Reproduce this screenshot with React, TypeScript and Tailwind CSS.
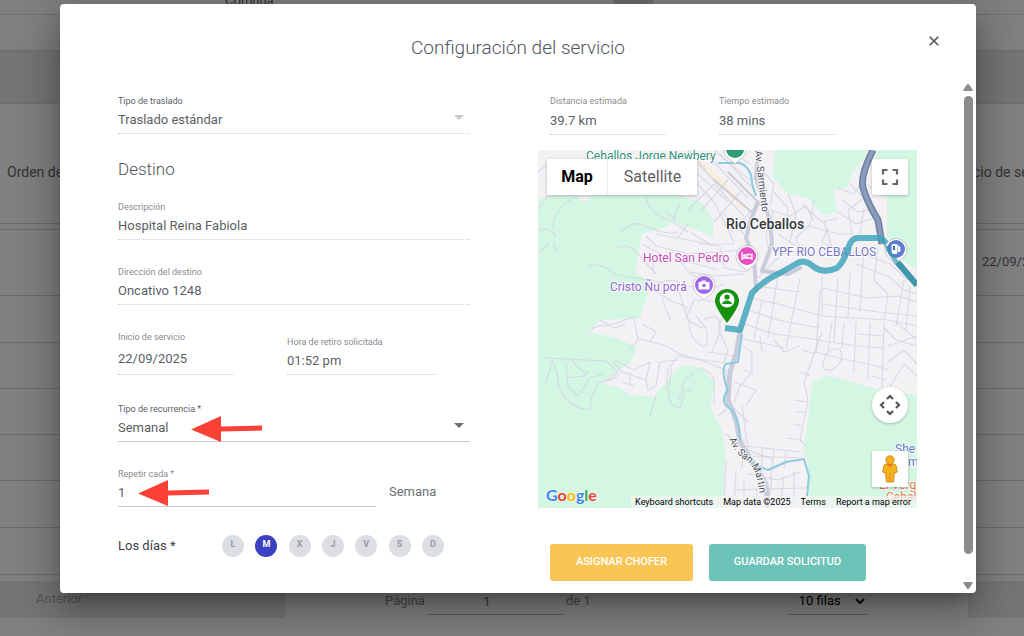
import { useId, useState, type ReactNode } from 'react';
import { clsx } from 'clsx';

const rowHeights = [
  'h-[6px]',
  'h-[66px]',
  'h-[47px]',
  'h-[46px]',
  'h-[46px]',
  'h-[46px]',
  'h-[47px]',
  'h-[47px]',
];

const weekDays = ['L', 'M', 'X', 'J', 'V', 'S', 'D'];

function Caret({ className }: { className?: string }) {
  return (
    <svg viewBox="0 0 10 5" className={clsx('pointer-events-none h-[5px] w-[10px]', className)} aria-hidden="true">
      <path d="M0 0h10L5 5z" fill="currentColor" />
    </svg>
  );
}

function Arrow({ className }: { className?: string }) {
  return (
    <svg viewBox="0 0 71 26" className={clsx('pointer-events-none absolute h-[26px] w-[71px]', className)} aria-hidden="true">
      <path d="M0 13.500L30 0v10.500l41-1v5l-41 1V26z" fill="#fb4135" />
    </svg>
  );
}

interface FieldProps {
  label: string;
  value: string;
  kind?: 'text' | 'select';
  disabled?: boolean;
  strong?: boolean;
  className?: string;
  boxClass?: string;
  children?: ReactNode;
}

function Field({ label, value, kind = 'text', disabled, strong, className, boxClass = 'h-[27px]', children }: FieldProps) {
  const id = useId();
  const control = 'w-full min-w-0 appearance-none bg-transparent p-0 text-[13px] leading-5 text-[#5b5f65] opacity-100 outline-none';
  return (
    <div className={clsx('relative', className)}>
      <label htmlFor={id} className={clsx('block text-[9px] leading-3', strong ? 'text-[#5c6068]' : 'text-[#888b90]')}>
        {label}
      </label>
      <div className={clsx('flex items-center border-b', disabled ? 'border-dotted border-[#cfd0d2]' : 'border-[#c8cacc]', boxClass)}>
        {kind === 'select' ? (
          <>
            <select id={id} disabled={disabled} defaultValue={value} className={control}>
              <option>{value}</option>
            </select>
            <Caret className={clsx('mr-[6px] mb-[6px] shrink-0', disabled ? 'text-[#c6c8ca]' : 'text-[#6b6e72]')} />
          </>
        ) : (
          <input id={id} disabled={disabled} defaultValue={value} className={control} />
        )}
      </div>
      {children}
    </div>
  );
}

function DayPicker() {
  const [days, setDays] = useState(['M']);
  const toggle = (day: string) =>
    setDays((prev) => (prev.includes(day) ? prev.filter((d) => d !== day) : [...prev, day]));

  return (
    <div className="mt-7 flex items-center" role="group" aria-labelledby="days-label">
      <span id="days-label" className="w-[104px] text-[13px] leading-5 text-[#3c4046]">
        Los días *
      </span>
      <div className="flex w-[222px] justify-between">
        {weekDays.map((day) => (
          <button
            key={day}
            type="button"
            aria-pressed={days.includes(day)}
            onClick={() => toggle(day)}
            className={clsx(
              'flex size-[22px] items-center justify-center rounded-full pb-0.5 text-[9px] font-bold',
              days.includes(day) ? 'bg-[#3c40c2] text-white' : 'bg-[#dcdee3] text-[#979aa3]',
            )}
          >
            {day}
          </button>
        ))}
      </div>
    </div>
  );
}

const parks = [
  'M0 50L10 46L35 45L47 52L56 45L139 45L165 53L175 70V87L159 80L135 72L125 78L105 83L102 93L97 123L110 130L112 137L102 168L62 170L50 182L75 187L99 197L92 213L62 233L82 238L92 245L115 247L129 233L139 218L150 215L164 218L177 233L172 257L184 280L187 297L185 358H0z',
  'M237 0L235 27L249 43L270 48L285 65L299 62L295 40L309 37L315 22L325 10L330 0z',
  'M337 0L345 45L349 47V87L367 113L379 118V0z',
  'M289 225L275 232L265 303L270 310L269 358H379V245L334 238z',
];

const streets = [
  // north-west slopes
  'M0 22L14 10L30 14M8 30L22 18M0 60Q8 48 14 40M14 78Q18 55 40 46M0 80Q14 76 18 88M2 102L12 92M16 94L18 102',
  'M108 47Q112 66 132 70L150 82M135 72L142 52M150 74L140 88M128 62L138 70M152 82L175 96',
  'M84 82Q92 72 104 74Q126 86 140 82M80 98Q92 92 100 104L118 124M50 116Q64 112 76 124Q92 128 112 130L140 138',
  'M108 86L118 96L150 104L178 102M104 94L126 106L152 112L180 120M118 84L160 92L182 96M116 124Q112 108 122 106',
  'M112 138L132 150L150 158M118 136Q126 128 142 132M124 148L132 170M140 138L150 170L164 178M138 104L152 124L170 132',
  // west ridge
  'M52 182Q56 174 70 176L98 166M62 170L76 178L88 174M96 168L100 190L92 200M104 174L118 182L112 192M100 188L128 196L142 204',
  'M8 208L68 211L80 222L66 232M14 210Q22 228 20 234Q26 252 42 258L52 260L54 246L60 232Q72 232 82 224M28 212L30 236L40 246L52 228L66 224',
  'M34 208Q38 220 50 222L46 226L28 228M8 232L14 212M75 212L84 222L108 230L110 240L118 236L122 212L140 210',
  'M76 210L96 220L112 212L108 230M128 240L130 220L140 206L166 210L188 213M118 246L112 266M84 232L96 236M92 222V236',
  'M134 218L130 240Q130 256 142 258L146 244Q140 230 156 224M142 250Q140 240 154 240M162 218Q176 222 176 232V254',
  // town centre
  'M142 48L160 24L190 52M150 60L176 34L206 66M160 14L186 40M168 4L210 48M182 4L216 40M164 60L190 30M176 72L204 40M196 80L216 58M186 64L206 84',
  'M150 0L168 20M176 0L212 30M192 0L212 14M156 30L176 52L196 92M160 94L196 94M178 102L206 100L212 112M182 96L186 118L208 122',
  'M152 122L178 126L206 124M150 136L170 140L186 134M148 168L156 150L186 152M152 168Q148 186 164 196Q172 198 168 178L158 166',
  'M166 170Q184 160 182 182L174 202M188 158L180 178L190 200L186 212M170 202L196 206M142 204L168 212L188 220V260L180 266',
  // north-east
  'M222 18L236 34L232 56M236 42L250 58L248 78M232 60L252 66L268 56L276 72M250 44L258 64L252 92M276 50L272 74L258 88L264 104',
  'M264 54L284 72L300 68M286 72L294 98M270 76L300 84L316 84M300 62L318 74L336 68M304 50L320 62L338 58M312 34L326 48L310 60M300 38L316 44L324 30L336 40',
  'M236 60L228 84L232 108M240 84L258 96M220 128L244 104L266 100M216 52L230 60M310 60L314 84M326 58L322 84M290 78L284 92L306 104',
  // grid in the east
  'M214 148L240 154L284 166M210 160L240 170L282 178M206 174L236 184L282 190M202 188L246 198M224 150L216 188M240 126L230 188M262 128L248 198M282 140L278 202',
  'M218 136L262 142M284 126V166L350 170L379 176M284 138L330 148L360 146L379 152M284 154L340 162L379 166M300 128L296 192M312 122L310 168M326 96L322 162',
  'M340 96L336 130L350 144L346 170M330 106L352 114L370 130M318 114L350 126L366 140L379 144M366 130L358 176M372 136L368 180M300 100L318 104',
  'M278 190L320 196L345 198M278 202L300 208L330 214M294 172L290 200M306 172L304 198M318 172L316 222M332 172L330 230M346 172L344 238M320 184L346 186',
  'M288 206Q292 196 302 200Q308 210 294 220Q280 222 288 206M346 178L358 190L379 196M350 196L379 186M350 212L366 200L379 214M350 240L366 214L379 226M358 172L379 190M332 214L350 220M334 226L348 230',
  'M284 182L266 232L270 250L262 290L268 296M264 200L278 204M262 222L272 226M256 250L270 252M258 262L268 262M256 274L264 276M248 288L264 290',
  // below the centre
  'M204 196L214 202V222L202 236L196 252M206 220L216 224M196 232L218 240L208 256M204 256L210 300L236 310M222 186L224 202M236 190L246 202L262 196',
  'M196 258L210 272M206 288L204 318M208 296L262 302M212 306L264 308M224 298V330M236 300L232 330M248 302L246 318M210 324L240 330L262 322',
  'M188 310L186 352M198 320L196 358M206 330V358M196 340L268 338M220 332L218 358M234 326L230 358M246 326L242 358M256 322V358M194 350L266 352M188 284L196 290',
];

const route = 'M379 135L355 107Q348 88 340 88H320Q314 88 311 96Q306 112 299 118Q286 124 276 117Q266 108 258 114L242 123Q226 130 214 143L202 180L187 178';

interface PinProps {
  x: number;
  y: number;
  color: string;
  children?: ReactNode;
}

function Pin({ x, y, color, children }: PinProps) {
  return (
    <g transform={`translate(${x} ${y})`}>
      <path d="M0 15Q-4 11-8 8A11 11 0 1 1 8 8Q4 11 0 15z" fill="#fff" stroke="#b9bcc4" strokeWidth="0.800" />
      <circle r="9" fill={color} />
      {children}
    </g>
  );
}

function MapDrawing() {
  return (
    <svg viewBox="0 0 379 358" preserveAspectRatio="xMidYMid slice" className="h-full w-full" role="img" aria-label="Rio Ceballos">
      <rect width="379" height="358" fill="#f3f1f4" />
      {parks.map((d) => (
        <path key={d} d={d} fill="#d4f7e3" />
      ))}
      <path d="M158 8L182 32L206 58" stroke="#f8efd8" strokeWidth="5" fill="none" />
      <g fill="none" stroke="#d3d5e2" strokeOpacity="0.800" strokeWidth="1.200" strokeLinejoin="round">
        {streets.map((d) => (
          <path key={d} d={d} />
        ))}
      </g>
      <g fill="none" stroke="#c9cddb" strokeWidth="4" strokeLinejoin="round" strokeLinecap="round">
        <path d="M220 2L218 28L226 52L232 72L234 94L224 121L250 124L262 118" />
        <path d="M220 52L212 72L208 88L216 108L218 140" />
        <path d="M176 30L216 64M190 22L218 50" strokeWidth="2" />
        <path d="M202 182L198 204L192 222L190 250L198 270L202 292L216 314L228 334L230 358" strokeWidth="5" />
      </g>
      <g fill="none" stroke="#8ccbe0" strokeWidth="2" strokeLinejoin="round">
        <path d="M180 13L202 13Q214 18 214 34L218 46" />
        <path d="M204 184L200 212L188 214Q182 220 190 240Q180 252 194 260Q202 272 202 290" />
        <path d="M202 302L214 314L230 320L248 312L266 309L271 326L269 346" />
      </g>
      <path d="M335 0Q322 26 325 38Q330 54 340 70L344 94" fill="none" stroke="#6d80a1" strokeWidth="7" />
      <path d="M335 0Q322 26 325 38Q330 54 340 70L344 94" fill="none" stroke="#8a9dbd" strokeWidth="4" />

      <g fontSize="12" stroke="#fff" strokeWidth="2" strokeOpacity="0.800" paintOrder="stroke">
        <text x="48" y="10" fill="#2f9479">Ceballos Jorge Newbery</text>
        <text x="105" y="112" fill="#c64fb6">Hotel San Pedro</text>
        <text x="72" y="141" fill="#9563d4">Cristo Ñu porá</text>
        <text x="234" y="106" fill="#7378c8">YPF RIO CEBALLOS</text>
        <text x="188" y="79" fill="#33363b" fontSize="14" fontWeight="500">Rio Ceballos</text>
        <text x="357" y="303" fill="#6a74cc">She</text>
        <text x="370" y="316" fill="#6a74cc">m</text>
        <text x="341" y="339" fill="#dd7d4b">El Verg</text>
        <text x="348" y="351" fill="#dd7d4b">Cebal</text>
      </g>

      <path d={route} fill="none" stroke="#3ba3ba" strokeOpacity="0.820" strokeWidth="6" strokeLinejoin="round" />
      <path d="M355 107L379 135" stroke="#2f8398" strokeOpacity="0.600" strokeWidth="6" />

      <g fontSize="10" fill="#4a4e55" stroke="#fff" strokeWidth="2" strokeOpacity="0.800" paintOrder="stroke">
        <path id="sarmiento" d="M217 1L225 70" fill="none" stroke="none" />
        <path id="sanmartin" d="M191 289Q197 304 209 311Q222 322 222 358" fill="none" stroke="none" />
        <text>
          <textPath href="#sarmiento">Av. Sarmiento</textPath>
        </text>
        <text>
          <textPath href="#sanmartin">Av. San Martin</textPath>
        </text>
      </g>

      <Pin x={197} y={-1} color="#2f9e77" />
      <Pin x={209} y={106} color="#e84fc0">
        <path d="M-5-4v8M-5 2H5M5 4V-1.500H0V2" fill="none" stroke="#fff" strokeWidth="1.400" />
        <circle cx="-2.500" cy="-0.500" r="1.500" fill="#fff" />
      </Pin>
      <Pin x={166} y={135} color="#a066e6">
        <path d="M-5.500-3H-3l1-1.500h3.500L2.500-3h3v7.500h-11z" fill="#fff" />
        <circle cy="0.500" r="1.800" fill="#a066e6" />
      </Pin>
      <Pin x={358} y={99} color="#5f7bd0">
        <path d="M-4-4.500h5v9h-5zM1.500-3.500L4-2v4.500H2" fill="#fff" stroke="#fff" strokeWidth="0.800" />
        <path d="M-2-3v4" stroke="#3f66b5" strokeWidth="2" />
      </Pin>
      <path d="M349 96Q349 101 364 118" fill="none" stroke="#3b93ae" strokeOpacity="0.700" strokeWidth="4" />

      <g transform="translate(189 140)">
        <path d="M0 33Q-12 17-12 11A12 12 0 1 1 12 11Q12 17 0 33z" fill="#17920f" />
        <circle cy="10" r="7.500" fill="#fff" />
        <circle cy="7" r="2.600" fill="#17920f" />
        <path d="M-5 14Q-4 10.500 0 10.500T5 14z" fill="#17920f" />
      </g>
    </svg>
  );
}

const controlShadow = 'shadow-[0_1px_3px_rgba(0,0,0,0.25)]';

function RouteMap() {
  return (
    <div className="relative h-[358px] overflow-hidden">
      <MapDrawing />
      <div className={clsx('absolute top-[9px] left-[9px] flex h-9 bg-white text-base', controlShadow)}>
        <button type="button" className="w-[61px] border-r border-[#ececec] font-bold text-black">
          Map
        </button>
        <button type="button" className="w-[89px] text-[#5f5f5f]">
          Satellite
        </button>
      </div>
      <button
        type="button"
        aria-label="Toggle fullscreen view"
        className={clsx('absolute top-[9px] right-[9px] flex size-9 items-center justify-center rounded-xs bg-white', controlShadow)}
      >
        <svg viewBox="0 0 18 18" className="size-[18px]" fill="none" stroke="#666" strokeWidth="2.200">
          <path d="M2 6.500V2h4.500M11.500 2H16v4.500M16 11.500V16h-4.500M6.500 16H2v-4.500" />
        </svg>
      </button>
      <div className="absolute right-[9px] bottom-[21px] flex flex-col gap-7">
        <button
          type="button"
          aria-label="Map camera controls"
          className={clsx('flex size-9 items-center justify-center rounded-full bg-white', controlShadow)}
        >
          <svg viewBox="0 0 22 22" className="size-[22px]" fill="none" stroke="#555" strokeWidth="2.200">
            <path d="M8 5l3-3 3 3M8 17l3 3 3-3M5 8l-3 3 3 3M17 8l3 3-3 3" />
          </svg>
        </button>
        <button
          type="button"
          aria-label="Drag Pegman onto the map to open Street View"
          className={clsx('flex size-9 items-center justify-center bg-white', controlShadow)}
        >
          <svg viewBox="0 0 16 28" className="h-7 w-4" fill="#f6b01f" stroke="#c98516" strokeWidth="0.800">
            <path d="M4 9h8q2 0 2.500 3l.8 5-2.300 1-.5-1-.8 10H4.300l-.8-10-.5 1-2.300-1 .8-5Q2 9 4 9z" />
            <circle cx="8" cy="5" r="4.200" />
            <path d="M5 9.500l3 2.500 3-2.500z" fill="#e0662a" stroke="none" />
            <path d="M8 19v8" />
          </svg>
        </button>
      </div>
      <a
        href="#map"
        aria-label="Google"
        className="absolute bottom-[1px] left-2 font-['Lato',sans-serif] text-base leading-6 font-bold [paint-order:stroke] [-webkit-text-stroke:1px_#ffffffcc]"
      >
        <span className="text-[#4285f4]">G</span>
        <span className="text-[#ea4335]">o</span>
        <span className="text-[#fbbc05]">o</span>
        <span className="text-[#4285f4]">g</span>
        <span className="text-[#34a853]">l</span>
        <span className="text-[#ea4335]">e</span>
      </a>
      <div className="absolute right-0 bottom-0 flex gap-[10px] bg-[#f5f5f5]/70 pr-[6px] pl-1 text-[9px] leading-3 whitespace-nowrap text-black">
        <button type="button">Keyboard shortcuts</button>
        <span>Map data ©2025</span>
        <a href="#terms">Terms</a>
        <a href="#report">Report a map error</a>
      </div>
    </div>
  );
}

function ServiceDialog() {
  return (
    <div
      role="dialog"
      aria-modal="true"
      aria-labelledby="dialog-title"
      className="w-full rounded-[4px] bg-white shadow-[0_11px_15px_-7px_rgba(0,0,0,0.3),0_24px_38px_3px_rgba(0,0,0,0.16),0_4px_40px_8px_rgba(0,0,0,0.16)]"
    >
      <header className="relative flex h-[78px] items-center justify-center">
        <h2 id="dialog-title" className="pt-2.5 text-[19px] leading-6 font-light text-[#4f545b]">
          Configuración del servicio
        </h2>
        <button type="button" aria-label="Cerrar" className="absolute top-[27px] right-8 flex size-5 items-center justify-center">
          <svg viewBox="0 0 10 10" className="size-[10px]" stroke="#4b4f56" strokeWidth="1.500">
            <path d="M0.700 0.700l8.600 8.600M9.300 0.700L0.700 9.300" />
          </svg>
        </button>
      </header>

      <div className="flex">
        <form className="grid flex-1 grid-cols-[352fr_379fr] gap-x-[68px] pt-[13px] pr-[46px] pb-3 pl-[58px]" onSubmit={(e) => e.preventDefault()}>
          <div>
            <Field label="Tipo de traslado" value="Traslado estándar" kind="select" disabled strong />
            <h3 className="mt-[23px] text-[17px] leading-6 font-light text-[#4f545b]">Destino</h3>
            <Field label="Descripción" value="Hospital Reina Fabiola" disabled className="mt-5" />
            <Field label="Dirección del destino" value="Oncativo 1248" disabled className="mt-[26px]" />
            <div className="mt-[26px] flex items-end gap-[53px]">
              <Field label="Inicio de servicio" value="22/09/2025" disabled className="w-[116px]" boxClass="h-8" />
              <Field label="Hora de retiro solicitada" value="01:52 pm" disabled className="w-[150px]" />
            </div>
            <Field label="Tipo de recurrencia *" value="Semanal" kind="select" strong className="mt-7">
              <Arrow className="top-[13px] left-[73px]" />
            </Field>
            <div className="mt-[26px] flex items-end gap-[13px]">
              <Field label="Repetir cada *" value="1" className="w-[258px]">
                <Arrow className="top-[12px] left-5" />
              </Field>
              <span className="pb-[5px] text-[13px] leading-5 text-[#6c7076]">Semana</span>
            </div>
            <DayPicker />
          </div>

          <div className="flex flex-col">
            <div className="flex gap-[53px] pl-3">
              <Field label="Distancia estimada" value="39.7 km" disabled className="w-[116px]" boxClass="h-7" />
              <Field label="Tiempo estimado" value="38 mins" disabled className="w-[116px]" boxClass="h-7" />
            </div>
            <div className="mt-[15px]">
              <RouteMap />
            </div>
            <div className="mt-auto flex gap-4 pt-9 pl-3 text-[11px] font-medium text-white">
              <button type="button" className="h-[37px] w-[143px] rounded-[3px] bg-[#f9c555]">
                ASIGNAR CHOFER
              </button>
              <button type="submit" className="h-[37px] w-[157px] rounded-[3px] bg-[#6cc3b7]">
                GUARDAR SOLICITUD
              </button>
            </div>
          </div>
        </form>

        <div className="mr-[3px] flex w-[10px] flex-col items-center pt-[2px] pb-1 text-[#8c8c8c]" aria-hidden="true">
          <svg viewBox="0 0 10 7" className="h-[7px] w-[10px]">
            <path d="M4 0.500q1-1 2 0L9.500 5.500q.5 1.500-1 1.500h-7q-1.500 0-1-1.500z" fill="currentColor" />
          </svg>
          <div className="mt-[5px] mb-7 w-[9px] flex-1 rounded-full bg-[#8c8c8c]" />
          <svg viewBox="0 0 10 7" className="h-[7px] w-[10px]">
            <path d="M4 6.500q1 1 2 0L9.500 1.500Q10 0 8.500 0h-7Q0 0 .5 1.500z" fill="currentColor" />
          </svg>
        </div>
      </div>
    </div>
  );
}

function RequestsPage() {
  return (
    <div className="text-[#333]">
      <div className="flex h-[15px] border-b border-[#717171] pl-[225px]">
        <span className="-mt-[7px] w-[388px] text-[13px] leading-4 text-[#2f2f2f]">Comuna</span>
        <span className="h-1 w-10 bg-[#6c6c6c]" />
      </div>
      <div className="h-9 border-b border-[#6b6b6b]" />
      <div className="h-[53px] border-b border-[#6e6e6e] bg-[#757575]" />
      <table className="w-full table-fixed border-collapse text-left">
        <thead>
          <tr className="h-[119px] border-b border-[#6b6b6b] text-sm whitespace-nowrap">
            <th scope="col" className="p-0 pt-[18px] pl-[7px] font-normal">
              Orden de servicio
            </th>
            <th scope="col" className="w-[66px] overflow-hidden p-0 pt-[18px] font-normal">
              Inicio de servicio
            </th>
          </tr>
        </thead>
        <tbody>
          {rowHeights.map((height, i) => (
            <tr key={i} className={clsx('border-b border-[#6b6b6b]', height)}>
              <td className="p-0" />
              <td className="overflow-hidden p-0 pl-6 text-[13px] leading-4">{i === 1 && '22/09/2025'}</td>
            </tr>
          ))}
        </tbody>
      </table>
      <div className="mt-[6px] flex h-[37px] text-[13px] text-[#474747]">
        <button type="button" className="w-[285px] bg-[#757575] pl-9 text-left text-[#555]">
          Anterior
        </button>
        <div className="flex flex-1 items-start pt-2 pl-[100px]">
          <label htmlFor="page" className="w-[42px] leading-6">
            Página
          </label>
          <input id="page" defaultValue="1" className="h-[26px] w-[136px] border-b border-[#5c5c5c] bg-transparent pr-4 text-center text-[#333] outline-none" />
          <span className="ml-[3px] leading-6">de 1</span>
          <div className="mr-auto ml-[198px] flex h-[26px] w-[78px] items-center border-b border-[#5c5c5c] pl-[10px]">
            <select aria-label="Filas por página" defaultValue="10 filas" className="w-full appearance-none bg-transparent text-black outline-none">
              <option>10 filas</option>
            </select>
            <svg viewBox="0 0 10 7" className="mr-[2px] h-[7px] w-[10px] shrink-0" fill="none" stroke="#111" strokeWidth="2.200" aria-hidden="true">
              <path d="M1 1l4 4 4-4" />
            </svg>
          </div>
        </div>
        <div className="w-14 bg-[#757575]" />
      </div>
    </div>
  );
}

export default function App() {
  return (
    <div className="relative min-h-screen overflow-hidden bg-[#808080] font-['Roboto',sans-serif]">
      <RequestsPage />
      <div className="absolute inset-0 pt-1 pr-12 pl-[60px]">
        <ServiceDialog />
      </div>
    </div>
  );
}
